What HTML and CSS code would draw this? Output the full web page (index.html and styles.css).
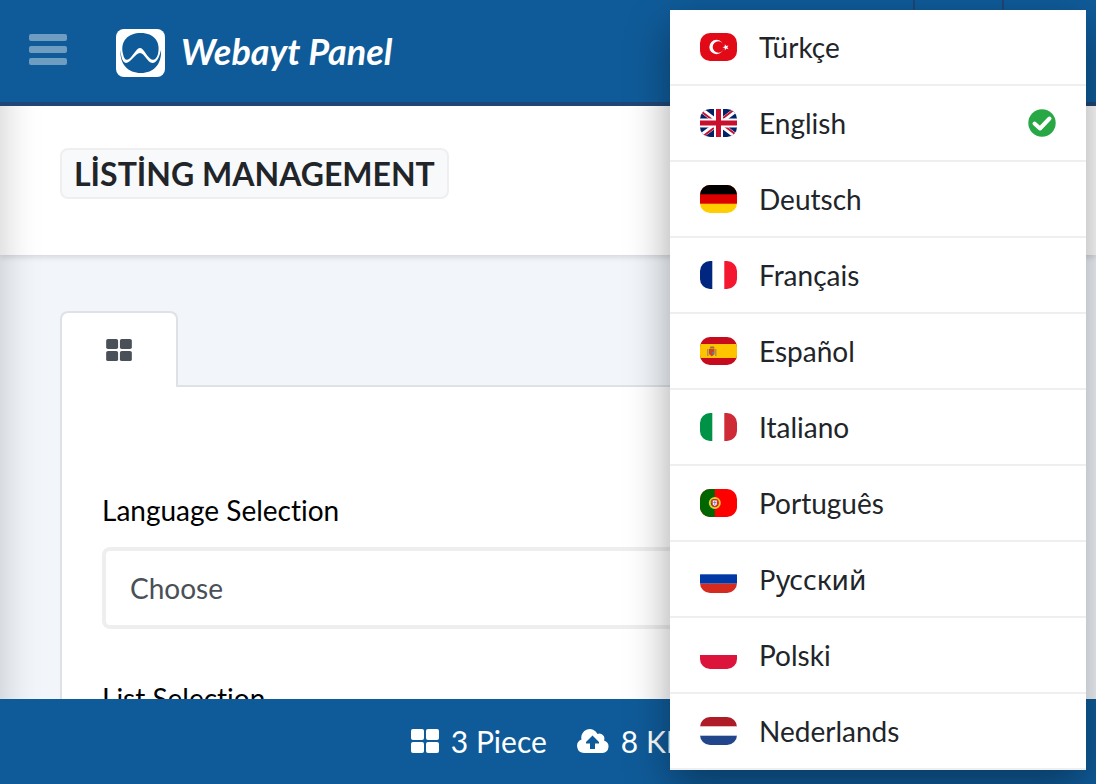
FILE: index.html
```html
<!DOCTYPE html>
<html lang="en">
<head>
<meta charset="utf-8">
<meta name="viewport" content="width=device-width, initial-scale=1">
<title>Webayt Panel</title>
<link rel="stylesheet" href="styles.css">
</head>
<body>
<svg class="defs" aria-hidden="true">
  <symbol id="grid" viewBox="0 0 28 24">
    <rect width="13" height="11" rx="2"/><rect x="15" width="13" height="11" rx="2"/>
    <rect y="13" width="13" height="11" rx="2"/><rect x="15" y="13" width="13" height="11" rx="2"/>
  </symbol>
</svg>

<header class="topbar">
  <button class="menu-btn" type="button" aria-label="Menu"><span></span><span></span><span></span></button>
  <a class="brand" href="#">
    <svg class="brand-logo" viewBox="0 0 49 48" aria-hidden="true">
      <rect width="49" height="48" rx="8" fill="#fff"/>
      <path d="M7 25C4 12 12 4 25 4s20 9 17 21c-1.500 5-4.500 7.500-8 4.500-4-3.500-6.500-10.500-10-10.500s-7 8-11 11c-3 2-5 0-6-5z" fill="#0f5b99"/>
      <path d="M4.500 21c.5 7 2 12.500 5.500 13 4.500 0 9-9.500 14-10 4.500 0 7.500 10 12.500 10 4 0 7-6 8.500-13C46 35 37.500 44 25 44 12 44 3.500 35 4.500 21z" fill="#0f5b99"/>
    </svg>
    <span>Webayt Panel</span>
  </a>
  <div class="topbar-cell"></div>
</header>

<main class="content">
  <section class="page-head"><h1 class="page-title">LİSTİNG MANAGEMENT</h1></section>
  <section class="workspace">
    <nav class="tabs">
      <a class="tab" href="#" aria-label="Listing"><svg class="tab-icon"><use href="#grid"/></svg></a>
    </nav>
    <form class="panel">
      <label class="label" for="language">Language Selection</label>
      <select class="select" id="language"><option>Choose</option></select>
      <label class="label" for="list">List Selection</label>
      <select class="select" id="list"><option>Choose</option></select>
    </form>
  </section>
</main>

<footer class="statusbar">
  <span class="stat"><svg class="grid-icon"><use href="#grid"/></svg>3 Piece</span>
  <span class="stat">
    <svg class="cloud-icon" viewBox="0 0 32 24" aria-hidden="true">
      <path fill-rule="evenodd" d="M7 24a7 7 0 0 1-2.500-13.500A8.500 8.500 0 0 1 20.500 5a5 5 0 0 1 6.500 6.500A6.400 6.400 0 0 1 25.500 24zM15.500 6.500L9 13v1.500h4V20h5v-5.500h4V13z"/>
    </svg>8 KB</span>
</footer>

<ul class="lang-menu">
  <li><button class="lang" type="button">
    <svg class="flag" viewBox="0 0 37 28"><rect width="37" height="28" fill="#e30a17"/><circle cx="16.500" cy="14" r="7.200" fill="#fff"/><circle cx="18.500" cy="14" r="5.800" fill="#e30a17"/><path d="M22.500 14.300l2.200-.8.200-2.300 1.400 1.800 2.200-.6-1.200 1.900 1.200 1.900-2.200-.6-1.400 1.800-.2-2.300z" fill="#fff"/></svg>
    Türkçe</button></li>
  <li><button class="lang" type="button" aria-current="true">
    <svg class="flag" viewBox="0 0 37 28"><rect width="37" height="28" fill="#012169"/><path d="M0 0l37 28M37 0L0 28" stroke="#fff" stroke-width="5"/><path d="M0 1.500L18.500 15.500M37 26.500L18.500 12.500M35 0L18.500 12.500M2 28l16.500-12.500" stroke="#c8102e" stroke-width="2"/><path d="M18.500 0v28M0 14h37" stroke="#fff" stroke-width="9"/><path d="M18.500 0v28M0 14h37" stroke="#c8102e" stroke-width="5"/></svg>
    English
    <svg class="check" viewBox="0 0 28 28"><circle cx="14" cy="14" r="13.700" fill="#28a745"/><path d="M6.500 14.500l5.500 5 9.500-10" fill="none" stroke="#fff" stroke-width="4" stroke-linecap="round" stroke-linejoin="round"/></svg></button></li>
  <li><button class="lang" type="button">
    <svg class="flag" viewBox="0 0 37 28"><rect width="37" height="28" fill="#ffce00"/><rect width="37" height="18.700" fill="#d00"/><rect width="37" height="9.300"/></svg>
    Deutsch</button></li>
  <li><button class="lang" type="button">
    <svg class="flag" viewBox="0 0 37 28"><rect width="37" height="28" fill="#fff"/><rect width="12.300" height="28" fill="#00267f"/><rect x="24.300" width="13" height="28" fill="#f31830"/></svg>
    Français</button></li>
  <li><button class="lang" type="button">
    <svg class="flag" viewBox="0 0 37 28"><rect width="37" height="28" fill="#c60b1e"/><rect y="7" width="37" height="14" fill="#ffc400"/><path d="M7 12h1.500v7H7zM15 12h1.500v7H15z" fill="#a98f62"/><path d="M9 12h5.500v5l-2.700 2.500L9 17z" fill="#c8452c"/><path d="M9.500 11.500l1-2h3.300l1 2z" fill="#9b6a35"/><path d="M12 15h2v2h-2z" fill="#76708f"/></svg>
    Español</button></li>
  <li><button class="lang" type="button">
    <svg class="flag" viewBox="0 0 37 28"><rect width="37" height="28" fill="#fff"/><rect width="12.300" height="28" fill="#009246"/><rect x="24.300" width="13" height="28" fill="#ce2b37"/></svg>
    Italiano</button></li>
  <li><button class="lang" type="button">
    <svg class="flag" viewBox="0 0 37 28"><rect width="37" height="28" fill="#f00"/><rect width="14.800" height="28" fill="#060"/><circle cx="14.800" cy="14" r="5" fill="none" stroke="#e6d32e" stroke-width="2"/><path d="M10 12.500l9.500 4M10.500 17l8-6" stroke="#b9b820"/><path d="M11.500 10.500h6.600v5.500l-3.300 2.500-3.300-2.500z" fill="#e22a36"/><path d="M12.800 11.500h4v4l-2 1.500-2-1.500z" fill="#fff"/><path d="M14.800 12v4M13.300 13.500h3" stroke="#6b8bc0"/></svg>
    Português</button></li>
  <li><button class="lang lang-cyrillic" type="button">
    <svg class="flag" viewBox="0 0 37 28"><rect width="37" height="28" fill="#fff"/><rect y="9.300" width="37" height="9.400" fill="#0039a6"/><rect y="18.700" width="37" height="9.300" fill="#d52b1e"/></svg>
    Русский</button></li>
  <li><button class="lang" type="button">
    <svg class="flag" viewBox="0 0 37 28"><rect width="37" height="28" fill="#fff"/><rect y="14" width="37" height="14" fill="#dc143c"/></svg>
    Polski</button></li>
  <li><button class="lang" type="button">
    <svg class="flag" viewBox="0 0 37 28"><rect width="37" height="28" fill="#fff"/><rect width="37" height="9.300" fill="#ae1c28"/><rect y="18.700" width="37" height="9.300" fill="#21468b"/></svg>
    Nederlands</button></li>
</ul>
</body>
</html>
```
FILE: styles.css
```css
* { box-sizing: border-box; }

body {
  margin: 0;
  height: 100vh;
  display: flex;
  flex-direction: column;
  overflow: hidden;
  position: relative;
  background: #f2f6fb;
  color: #212529;
  font: 28px/42px Lato, "Noto Sans", sans-serif;
  font-variant-ligatures: none;
}

button, select { font: inherit; color: inherit; }

.defs { position: absolute; width: 0; height: 0; }

.topbar {
  flex: none;
  display: flex;
  align-items: stretch;
  height: 106px;
  padding: 0 92px 0 29px;
  background: #0f5b99;
  border-bottom: 4px solid #1f4676;
  position: relative;
  z-index: 2;
}

.menu-btn {
  align-self: center;
  display: grid;
  gap: 5px;
  width: 38px;
  padding: 0 0 3px;
  border: 0;
  background: none;
}

.menu-btn span {
  height: 7px;
  border-radius: 2px;
  background: #6f9dc2;
}

.brand {
  display: flex;
  align-items: center;
  gap: 16px;
  margin-left: 49px;
  color: #fff;
  font-size: 36px;
  font-style: italic;
  font-weight: 700;
  text-decoration: none;
}

.brand-logo { width: 49px; height: 48px; margin-top: 4px; }

.topbar-cell {
  width: 91px;
  margin-left: auto;
  border: solid #1f4676;
  border-width: 0 2px;
}

.content {
  flex: 1;
  min-height: 0;
  overflow: hidden;
  position: relative;
}

/* Shadow cast by the collapsed side menu */
.content::before {
  content: "";
  position: absolute;
  z-index: 1;
  top: -60px;
  bottom: -60px;
  left: -60px;
  width: 60px;
  box-shadow: 0 0 40px rgba(0, 0, 0, .22);
}

.page-head {
  height: 149px;
  padding: 42px 60px;
  background: #fff;
  box-shadow: 0 2px 6px rgba(0, 0, 0, .14);
  position: relative;
}

.page-title {
  display: inline-block;
  margin: 0;
  padding: 0 12px;
  border: 2px solid #efefef;
  border-radius: 8px;
  background: #f8f9fb;
  font-size: 32px;
  font-weight: 700;
  line-height: 47px;
  white-space: nowrap;
}

.workspace { padding: 56px 60px; }

.tabs { display: flex; }

.tab {
  display: grid;
  place-items: center;
  width: 118px;
  height: 76px;
  margin-bottom: -2px;
  border: 2px solid #dee2e6;
  border-bottom: 0;
  border-radius: 8px 8px 0 0;
  background: #fff;
  color: #495057;
  position: relative;
}

.tab-icon { width: 26px; height: 22px; fill: currentColor; }

.panel {
  display: flex;
  flex-direction: column;
  padding: 102px 40px 60px;
  border: 2px solid #dee2e6;
  background: #fff;
}

.label {
  margin-bottom: 16px;
  color: #000;
}

.select {
  height: 82px;
  margin-bottom: 48px;
  padding: 0 24px;
  border: 4px solid #eee;
  border-radius: 8px;
  background: #fff;
  color: #495057;
  appearance: none;
}

.statusbar {
  flex: none;
  display: flex;
  align-items: center;
  justify-content: center;
  gap: 30px;
  height: 85px;
  padding-bottom: 1px;
  background: #0f5b99;
  color: #fff;
  font-size: 30px;
  position: relative;
  z-index: 2;
}

.stat {
  display: flex;
  align-items: center;
  gap: 12px;
}

.grid-icon { width: 28px; height: 24px; fill: currentColor; }
.cloud-icon { width: 32px; height: 24px; fill: currentColor; }

.lang-menu {
  position: absolute;
  z-index: 3;
  top: 10px;
  right: 10px;
  width: 416px;
  margin: 0;
  padding: 0;
  list-style: none;
  background: #fff;
  box-shadow: 0 16px 40px rgba(0, 0, 0, .36);
}

.lang {
  display: flex;
  align-items: center;
  gap: 22px;
  width: 100%;
  height: 76px;
  padding: 0 30px;
  border: 0;
  border-bottom: 2px solid #efefef;
  background: none;
  text-align: left;
}

.lang-cyrillic { font-family: "Noto Sans", sans-serif; }

.flag { width: 37px; height: 28px; border-radius: 10px; }
.check { width: 28px; height: 28px; margin-left: auto; }
```
